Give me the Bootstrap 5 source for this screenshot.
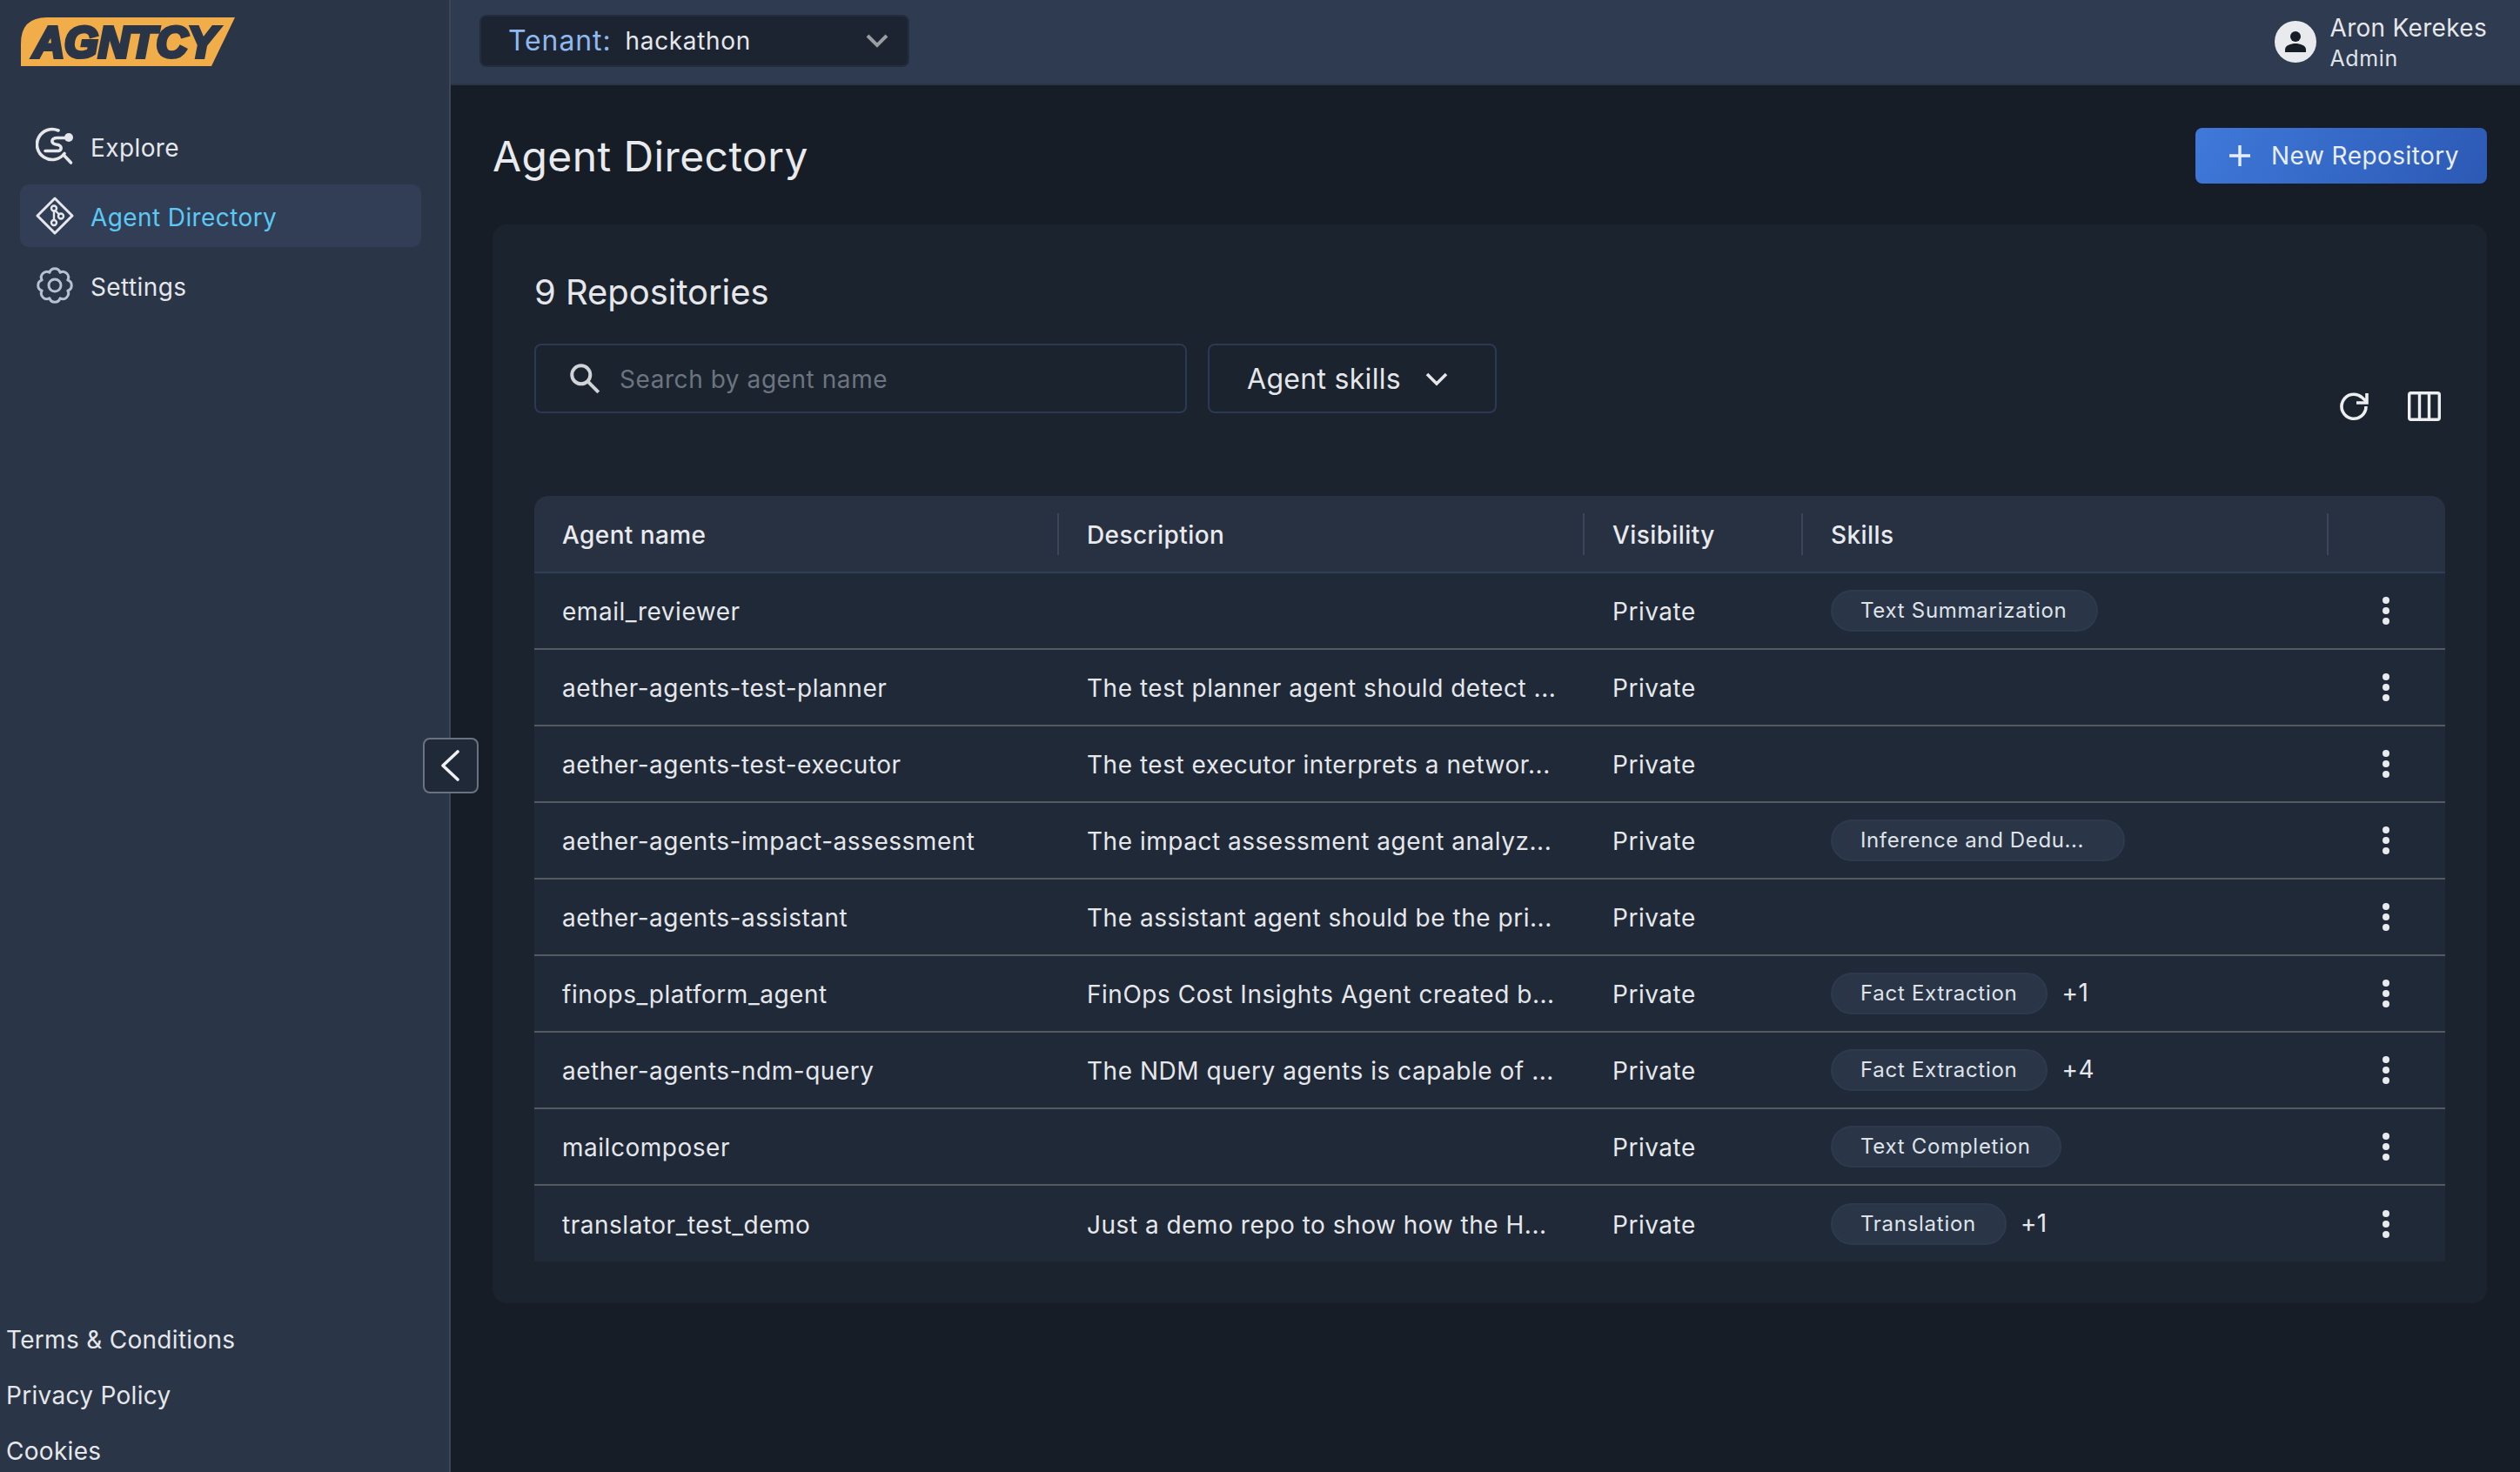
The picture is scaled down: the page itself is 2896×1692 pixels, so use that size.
<!DOCTYPE html>
<html lang="en">
<head>
<meta charset="utf-8">
<title>Agent Directory</title>
<link href="https://cdn.jsdelivr.net/npm/bootstrap@5.3.0/dist/css/bootstrap.min.css" rel="stylesheet">
<style>
html,body{height:100%;}
body{font-family:Inter,"Liberation Sans",sans-serif;background:#161d27;color:#e5e7eb;font-size:28px;letter-spacing:.3px;overflow:hidden;}
.app-shell{height:1692px;position:relative;}
.side{width:518px;flex:none;background:#2a3547;border-right:2px solid #3b4657;}
.logo-box{padding:20px 0 0 24px;height:132px;}
.logo-box svg{display:block;overflow:visible;}
.logo-word{font-family:"Liberation Sans",sans-serif;font-weight:700;font-style:italic;font-size:50px;fill:#2a3547;stroke:#2a3547;stroke-width:4.2px;letter-spacing:0;}
.side-menu{padding:0 32px 0 23px;gap:8px;}
.side-item{height:72px;padding-left:18px;gap:19px;border-radius:10px;color:#e5e7eb;text-decoration:none;}
.side-item span{padding-top:3px;letter-spacing:.4px;}
.side-item svg{width:44px;height:44px;flex:none;}
.side-item.is-on{background:#323e56;color:#5bc8f5;}
.side-foot{padding-left:7px;gap:16px;}
.side-foot a{color:#e5e7eb;text-decoration:none;height:48px;display:flex;align-items:center;}
.collapse-btn{position:absolute;left:486px;top:848px;width:64px;height:64px;padding:0 2px 0 0;background:#1f2937;border:2px solid #6b7380;border-radius:8px;display:flex;align-items:center;justify-content:center;}
.top-bar{height:98px;background:#2f3b50;border-bottom:2px solid #2a3447;padding:0 38px 0 33px;}
.tenant{width:494px;height:60px;margin-bottom:2px;background:#1d2431;border:2px solid #232d40;border-radius:8px;padding:0 22px 0 31px;}
.tenant-label{color:#8fb8f0;font-size:32px;letter-spacing:.9px;margin-right:16px;}
.tenant-value{letter-spacing:.65px;}
.avatar{width:48px;height:48px;flex:none;}
.user-name{line-height:36px;padding-top:2px;}
.user-role{font-size:25px;line-height:34px;letter-spacing:.6px;color:#dfe3e8;}
.main-area{padding:0 38px 0 48px;}
.title-row{height:160px;padding-top:2px;}
.page-title{font-size:48px;font-weight:400;margin:0;padding-top:2px;letter-spacing:.4px;color:#e8eaed;}
.new-btn{width:335px;height:64px;padding:0 0 0 6px;gap:23px;border:0;border-radius:8px;color:#e8eef8;font-size:28px;background:linear-gradient(120deg,#3f79da,#2c59b4);letter-spacing:.45px;}
.panel-box{background:#1b232f;border-radius:16px;padding:48px;height:1240px;}
.count-title{font-size:40px;font-weight:400;margin:3px 0 0;line-height:54px;letter-spacing:-.05px;color:#e5e7eb;}
.filter-row{margin-top:32px;height:96px;}
.search-box{width:750px;height:80px;border:2px solid #2b3a52;border-radius:8px;padding-left:36px;gap:18px;background:transparent;}
.search-box input{background:transparent;border:0;outline:0;color:#e5e7eb;font-size:28px;flex:1;letter-spacing:.56px;padding-top:2px;}
.search-box input::placeholder{color:#6c7480;opacity:1;}
.skills-btn{width:332px;height:80px;border:2px solid #2b3a52;border-radius:8px;background:transparent;color:#e5e7eb;font-size:32px;margin-left:24px;padding:2px 0 0 43px;gap:28px;letter-spacing:.3px;}
.tools{margin-left:auto;padding-right:5px;gap:44px;padding-top:54px;}
.data-wrap{margin-top:79px;border-radius:16px 16px 0 0;overflow:hidden;}
.data-table{table-layout:fixed;width:2196px;margin:0;letter-spacing:.52px;--bs-table-bg:#202938;--bs-table-color:#e5e7eb;--bs-table-border-color:#555a60;}
.data-table th{height:88px;background:#283142;color:#e8eaed;font-weight:500;letter-spacing:.4px;border-bottom:2px solid #2f3d57;padding:2px 0 0 32px;vertical-align:middle;position:relative;}
.data-table th:not(:last-child)::after{content:"";position:absolute;right:0;top:20px;height:48px;width:2px;background:#3b4659;}
.data-table td{height:88px;padding:2px 0 0 32px;vertical-align:middle;border-bottom:2px solid #555a60;white-space:nowrap;font-weight:400;}
.data-table tr:last-child td{border-bottom:0;}
.skill-chip{display:inline-block;height:48px;line-height:44px;padding:0 33px 0 32px;border:2px solid #2d3a4e;background:#2a3648;border-radius:24px;font-size:24px;letter-spacing:.72px;color:#dfe3e8;transform:translateY(-1px);}
.skill-chip-long{width:338px;letter-spacing:.62px;}
.skill-more{font-size:28px;margin-left:16px;letter-spacing:.4px;}
.kebab{width:8px;height:32px;display:block;margin:-2px 0 0 30px;}
</style>
</head>
<body>
<div class="app-shell d-flex">
  <aside class="side d-flex flex-column">
    <div class="logo-box">
      <svg width="246" height="57" viewBox="0 0 246 57"><path d="M0 56V30Q0 0 30 0H246L219 56Z" fill="#f0ad4a"/><text class="logo-word" x="14" y="45.500" textLength="211" lengthAdjust="spacingAndGlyphs">AGNTCY</text></svg>
    </div>
    <nav class="side-menu d-flex flex-column">
      <a class="side-item d-flex align-items-center" href="#"><svg viewBox="0 0 44 44" fill="none" stroke="#e5e7eb" stroke-width="3.600" stroke-linecap="round"><path d="M26 4A17.500 17.500 0 1 0 33 30.500"/><path d="M32 32L40.500 41"/><path d="M35 12.500H25C21 12.500 18.500 14 19 17C19.500 20 24 20 27 21C30 22.500 30 27 26 27.500H11"/><circle cx="38" cy="12" r="5" fill="#e5e7eb" stroke="none"/></svg><span>Explore</span></a>
      <a class="side-item is-on d-flex align-items-center" href="#"><svg viewBox="0 0 44 44" fill="none" stroke="#e5e7eb" stroke-width="3" stroke-linejoin="round"><path d="M22 2L42 22L22 42L2 22Z"/><g stroke-width="2.400"><circle cx="21" cy="13.500" r="3"/><circle cx="21" cy="30" r="3"/><circle cx="29" cy="22.500" r="3"/><path d="M21 16.500V27M22.500 16L27 20.500"/></g></svg><span>Agent Directory</span></a>
      <a class="side-item d-flex align-items-center" href="#"><svg viewBox="0 0 44 44" fill="none" stroke="#b6c2d2" stroke-width="3" stroke-linejoin="round"><path transform="translate(22 22)" d="M14.800 6.100A6.400 6.400 0 0 1 6.100 14.800A6.400 6.400 0 0 1 -6.100 14.800A6.400 6.400 0 0 1 -14.800 6.100A6.400 6.400 0 0 1 -14.800 -6.100A6.400 6.400 0 0 1 -6.100 -14.800A6.400 6.400 0 0 1 6.100 -14.800A6.400 6.400 0 0 1 14.800 -6.100A6.400 6.400 0 0 1 14.800 6.100Z"/><circle cx="22" cy="22" r="7"/></svg><span>Settings</span></a>
    </nav>
    <div class="side-foot d-flex flex-column mt-auto">
      <a href="#">Terms &amp; Conditions</a>
      <a href="#">Privacy Policy</a>
      <a href="#">Cookies</a>
    </div>
  </aside>
  <button class="collapse-btn" type="button" aria-label="Collapse"><svg width="24" height="38" viewBox="0 0 24 38" fill="none" stroke="#f0f1f3" stroke-width="3.600" stroke-linecap="round" stroke-linejoin="round"><path d="M21 3L4 19L21 35"/></svg></button>
  <div class="flex-grow-1 d-flex flex-column">
    <header class="top-bar d-flex align-items-center justify-content-between">
      <div class="tenant d-flex align-items-center">
        <span class="tenant-label">Tenant:</span><span class="tenant-value">hackathon</span>
        <svg class="ms-auto" width="26" height="16" viewBox="0 0 26 16" fill="none" stroke="#9a9da3" stroke-width="4"><path d="M2 2L13 13L24 2"/></svg>
      </div>
      <div class="d-flex align-items-center gap-3">
        <svg class="avatar" viewBox="0 0 48 48"><circle cx="24" cy="24" r="24" fill="#e8eaed"/><circle cx="24" cy="18" r="6" fill="#161d27"/><path d="M12 36V33C12 28 19 26 24 26S36 28 36 33V36Z" fill="#161d27"/></svg>
        <div><div class="user-name">Aron Kerekes</div><div class="user-role">Admin</div></div>
      </div>
    </header>
    <main class="main-area flex-grow-1">
      <div class="title-row d-flex align-items-center justify-content-between">
        <h1 class="page-title">Agent Directory</h1>
        <button class="new-btn btn d-flex align-items-center justify-content-center" type="button"><svg width="26" height="26" viewBox="0 0 26 26" stroke="#e8eef8" stroke-width="3.400"><path d="M13 1V25M1 13H25"/></svg>New Repository</button>
      </div>
      <section class="panel-box">
        <h2 class="count-title">9 Repositories</h2>
        <div class="filter-row d-flex align-items-start">
          <label class="search-box d-flex align-items-center">
            <svg width="40" height="40" viewBox="0 0 38 38" fill="none" stroke="#d0d3d8" stroke-width="3.800"><circle cx="15" cy="15" r="10"/><path d="M22 22L34 34"/></svg>
            <input type="text" placeholder="Search by agent name">
          </label>
          <button class="skills-btn d-flex align-items-center" type="button">Agent skills<svg width="26" height="16" viewBox="0 0 26 16" fill="none" stroke="#e5e7eb" stroke-width="3.600"><path d="M2 2L13 13L24 2"/></svg></button>
          <div class="tools d-flex align-items-center">
            <svg width="36" height="36" viewBox="0 0 36 36" fill="none" stroke="#eceef0" stroke-width="3.600"><path d="M32 18A14 14 0 1 1 27 7.500L32 12"/><path d="M33 3V14H21" stroke-linejoin="miter"/></svg>
            <svg width="38" height="34" viewBox="0 0 38 34" fill="none" stroke="#eceef0" stroke-width="3.400" stroke-linejoin="round"><rect x="1.700" y="1.700" width="34.600" height="30.600" rx="2"/><path d="M13.500 2V32M24.500 2V32"/></svg>
          </div>
        </div>
        <div class="data-wrap">
          <table class="table data-table">
            <colgroup><col style="width:603px"><col style="width:604px"><col style="width:251px"><col style="width:604px"><col style="width:134px"></colgroup>
            <thead><tr><th>Agent name</th><th>Description</th><th>Visibility</th><th>Skills</th><th></th></tr></thead>
            <tbody>
              <tr><td>email_reviewer</td><td></td><td>Private</td><td><span class="skill-chip">Text Summarization</span></td><td><svg class="kebab" viewBox="0 0 8 32" fill="#e8eaed"><circle cx="4" cy="4" r="4"/><circle cx="4" cy="16" r="4"/><circle cx="4" cy="28" r="4"/></svg></td></tr>
              <tr><td>aether-agents-test-planner</td><td>The test planner agent should detect ...</td><td>Private</td><td></td><td><svg class="kebab" viewBox="0 0 8 32" fill="#e8eaed"><circle cx="4" cy="4" r="4"/><circle cx="4" cy="16" r="4"/><circle cx="4" cy="28" r="4"/></svg></td></tr>
              <tr><td>aether-agents-test-executor</td><td>The test executor interprets a networ...</td><td>Private</td><td></td><td><svg class="kebab" viewBox="0 0 8 32" fill="#e8eaed"><circle cx="4" cy="4" r="4"/><circle cx="4" cy="16" r="4"/><circle cx="4" cy="28" r="4"/></svg></td></tr>
              <tr><td>aether-agents-impact-assessment</td><td>The impact assessment agent analyz...</td><td>Private</td><td><span class="skill-chip skill-chip-long">Inference and Dedu...</span></td><td><svg class="kebab" viewBox="0 0 8 32" fill="#e8eaed"><circle cx="4" cy="4" r="4"/><circle cx="4" cy="16" r="4"/><circle cx="4" cy="28" r="4"/></svg></td></tr>
              <tr><td>aether-agents-assistant</td><td>The assistant agent should be the pri...</td><td>Private</td><td></td><td><svg class="kebab" viewBox="0 0 8 32" fill="#e8eaed"><circle cx="4" cy="4" r="4"/><circle cx="4" cy="16" r="4"/><circle cx="4" cy="28" r="4"/></svg></td></tr>
              <tr><td>finops_platform_agent</td><td>FinOps Cost Insights Agent created b...</td><td>Private</td><td><span class="skill-chip">Fact Extraction</span><span class="skill-more">+1</span></td><td><svg class="kebab" viewBox="0 0 8 32" fill="#e8eaed"><circle cx="4" cy="4" r="4"/><circle cx="4" cy="16" r="4"/><circle cx="4" cy="28" r="4"/></svg></td></tr>
              <tr><td>aether-agents-ndm-query</td><td>The NDM query agents is capable of ...</td><td>Private</td><td><span class="skill-chip">Fact Extraction</span><span class="skill-more">+4</span></td><td><svg class="kebab" viewBox="0 0 8 32" fill="#e8eaed"><circle cx="4" cy="4" r="4"/><circle cx="4" cy="16" r="4"/><circle cx="4" cy="28" r="4"/></svg></td></tr>
              <tr><td>mailcomposer</td><td></td><td>Private</td><td><span class="skill-chip">Text Completion</span></td><td><svg class="kebab" viewBox="0 0 8 32" fill="#e8eaed"><circle cx="4" cy="4" r="4"/><circle cx="4" cy="16" r="4"/><circle cx="4" cy="28" r="4"/></svg></td></tr>
              <tr><td>translator_test_demo</td><td>Just a demo repo to show how the H...</td><td>Private</td><td><span class="skill-chip">Translation</span><span class="skill-more">+1</span></td><td><svg class="kebab" viewBox="0 0 8 32" fill="#e8eaed"><circle cx="4" cy="4" r="4"/><circle cx="4" cy="16" r="4"/><circle cx="4" cy="28" r="4"/></svg></td></tr>
            </tbody>
          </table>
        </div>
      </section>
    </main>
  </div>
</div>
<script src="https://cdn.jsdelivr.net/npm/bootstrap@5.3.0/dist/js/bootstrap.bundle.min.js"></script>
</body>
</html>
